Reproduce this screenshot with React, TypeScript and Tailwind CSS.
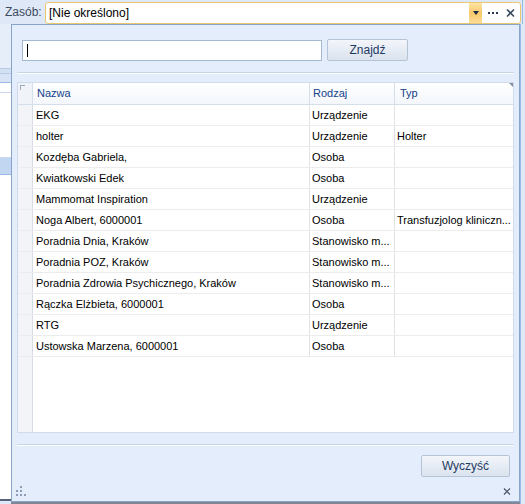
import React from "react";

const rows: [string, string, string][] = [
  ["EKG", "Urządzenie", ""],
  ["holter", "Urządzenie", "Holter"],
  ["Kozdęba Gabriela,", "Osoba", ""],
  ["Kwiatkowski Edek", "Osoba", ""],
  ["Mammomat Inspiration", "Urządzenie", ""],
  ["Noga Albert, 6000001", "Osoba", "Transfuzjolog kliniczn..."],
  ["Poradnia Dnia, Kraków", "Stanowisko m...", ""],
  ["Poradnia POZ, Kraków", "Stanowisko m...", ""],
  ["Poradnia Zdrowia Psychicznego, Kraków", "Stanowisko m...", ""],
  ["Rączka Elżbieta, 6000001", "Osoba", ""],
  ["RTG", "Urządzenie", ""],
  ["Ustowska Marzena, 6000001", "Osoba", ""],
];

export default function App() {
  return (
    <div
      className="w-[525px] h-[504px] overflow-hidden bg-[#dfe8f6] flex flex-col text-[11px] leading-none"
      style={{ fontFamily: '"Liberation Sans", Arial, sans-serif' }}
    >
      {/* top bar */}
      <div className="h-[24px] flex items-center shrink-0">
        <span className="w-[45px] pl-[5px] text-[#3c4b5e] text-[12px]">Zasób:</span>
        <div className="w-[476px] h-[22px] mt-[1px] rounded-[3px] border border-[#e9c76f] bg-white flex items-center">
          <span className="pl-[3px] flex-1 text-[12px] text-black">[Nie określono]</span>
          <div className="w-[13px] h-[20px] bg-gradient-to-b from-[#fde4a4] via-[#f9c96a] to-[#fbdc98] flex items-center justify-center">
            <div className="w-0 h-0 border-l-[3px] border-r-[3px] border-t-[4px] border-l-transparent border-r-transparent border-t-[#1b2a44]" />
          </div>
          <div className="w-[22px] flex items-center justify-center gap-[2px]">
            <span className="w-[2px] h-[2px] bg-[#2b3b55]" />
            <span className="w-[2px] h-[2px] bg-[#2b3b55]" />
            <span className="w-[2px] h-[2px] bg-[#2b3b55]" />
          </div>
          <svg width="14" height="10" viewBox="0 0 14 10" className="mr-[2px]">
            <path d="M3 1.5 L10 8.5 M10 1.5 L3 8.5" stroke="#3a4a60" strokeWidth="1.6" />
          </svg>
        </div>
        <div className="w-[1px] h-full ml-[1px] bg-[#99bbe8]" />
      </div>

      <div className="flex flex-1 min-h-0">
        {/* left strip behind popup */}
        <div className="w-[11px] flex flex-col shrink-0 bg-[#e6eef9]">
          <div className="h-[44px]" />
          <div className="h-[1px] bg-[#b8cbe6]" />
          <div className="h-[4px] bg-[#d4e1f3]" />
          <div className="h-[1px] bg-[#b8cbe6]" />
          <div className="h-[8px] bg-[#d8e4f5]" />
          <div className="h-[1px] bg-[#99bbe8]" />
          <div className="h-[9px] bg-white" />
          <div className="h-[1px] bg-[#c9d8ee]" />
          <div className="h-[64px] bg-white" />
          <div className="h-[1px] bg-[#c9d8ee]" />
          <div className="h-[16px] bg-[#c2d6f2]" />
          <div className="h-[1px] bg-[#99bbe8]" />
          <div className="flex-1 bg-white" />
          <div className="h-[2px] bg-[#58647a]" />
          <div className="h-[3px] bg-[#dfe8f6]" />
        </div>

        {/* popup */}
        <div className="w-[509px] flex flex-col shrink-0">
          <div className="flex-1 border border-[#8aa4c8] bg-[#e3edfb] flex flex-col min-h-0">
            <div className="h-[14px]" />
            <div className="flex items-center h-[22px] pl-[10px]">
              <div className="w-[300px] h-[21px] border border-[#a5b8d2] bg-white flex items-center pl-[4px]">
                <div className="w-[1px] h-[13px] bg-black" />
              </div>
              <div className="ml-[5px] w-[81px] h-[22px] border border-[#b5c3d6] rounded-[2px] bg-gradient-to-b from-[#f3f6fa] via-[#e6ecf4] to-[#dbe3ee] flex items-center justify-center text-[#1e3a62] text-[12px]">
                Znajdź
              </div>
            </div>
            <div className="h-[11px]" />
            <div className="mx-[5px] h-[1px] bg-[#c5d4e8]" />
            <div className="mx-[5px] h-[1px] bg-white" />
            <div className="h-[8px]" />

            {/* grid */}
            <div className="mx-[5px] h-[351px] border border-[#d0dcec] bg-white flex flex-col">
              <div className="h-[22px] flex bg-gradient-to-b from-white to-[#f3f6fb] border-b border-[#d5dfec] text-[#15428b]">
                <div className="w-[15px] border-r border-[#d5dfec] bg-[#f0f3f8] relative">
                  <div className="absolute left-[2px] top-[2px] w-[5px] h-[1px] bg-[#9aa9bd]" />
                  <div className="absolute left-[2px] top-[2px] w-[1px] h-[5px] bg-[#9aa9bd]" />
                </div>
                <div className="w-[277px] border-r border-[#d5dfec] flex items-center pl-[4px]">Nazwa</div>
                <div className="w-[85px] border-r border-[#d5dfec] flex items-center pl-[3px]">Rodzaj</div>
                <div className="flex-1 flex items-center pl-[5px] relative">
                  Typ
                  <div className="absolute right-[0px] top-[0px] w-0 h-0 border-l-[4px] border-t-[4px] border-l-transparent border-t-[#7f8da0]" />
                </div>
              </div>
              {rows.map(([a, b, c], i) => (
                <div key={i} className="h-[21px] flex border-b border-[#ececec] text-black">
                  <div className="w-[15px] border-r border-[#d8dde5] bg-[#f2f4f7]" />
                  <div className="w-[277px] border-r border-[#e2e2e2] flex items-center pl-[3px] whitespace-nowrap overflow-hidden">{a}</div>
                  <div className="w-[85px] border-r border-[#e2e2e2] flex items-center pl-[2px] whitespace-nowrap overflow-hidden">{b}</div>
                  <div className="flex-1 flex items-center pl-[2px] whitespace-nowrap overflow-hidden">{c}</div>
                </div>
              ))}
              <div className="flex-1 flex">
                <div className="w-[15px] border-r border-[#d8dde5] bg-[#f2f4f7]" />
                <div className="flex-1" />
              </div>
            </div>

            <div className="h-[11px]" />
            <div className="mx-[5px] h-[1px] bg-[#c5d4e8]" />
            <div className="mx-[5px] h-[1px] bg-white" />
            <div className="h-[9px]" />
            <div className="flex justify-end pr-[9px]">
              <div className="w-[89px] h-[22px] border border-[#b5c3d6] rounded-[2px] bg-gradient-to-b from-[#f3f6fa] via-[#e6ecf4] to-[#dbe3ee] flex items-center justify-center text-[#1e3a62] text-[12px]">
                Wyczyść
              </div>
            </div>
            <div className="flex-1 flex items-end justify-between px-[4px] pb-[5px]">
              <div className="grid grid-cols-3 gap-[2px] w-[10px]">
                <span />
                <span className="w-[2px] h-[2px] bg-[#8c9db5]" />
                <span />
                <span className="w-[2px] h-[2px] bg-[#8c9db5]" />
                <span className="w-[2px] h-[2px] bg-[#8c9db5]" />
                <span />
                <span className="w-[2px] h-[2px] bg-[#8c9db5]" />
                <span className="w-[2px] h-[2px] bg-[#8c9db5]" />
                <span className="w-[2px] h-[2px] bg-[#8c9db5]" />
              </div>
              <svg width="8" height="7" viewBox="0 0 8 7" className="mr-[4px] mb-[1px]">
                <path d="M1 0.5 L7 6.5 M7 0.5 L1 6.5" stroke="#4a5568" strokeWidth="1.2" />
              </svg>
            </div>
          </div>
          <div className="h-[2px] bg-[#7f8796]" />
        </div>

        <div className="flex-1 flex">
          <div className="w-[1px] bg-[#99bbe8]" />
          <div className="flex-1 bg-[#dfe8f6]" />
        </div>
      </div>
    </div>
  );
}
